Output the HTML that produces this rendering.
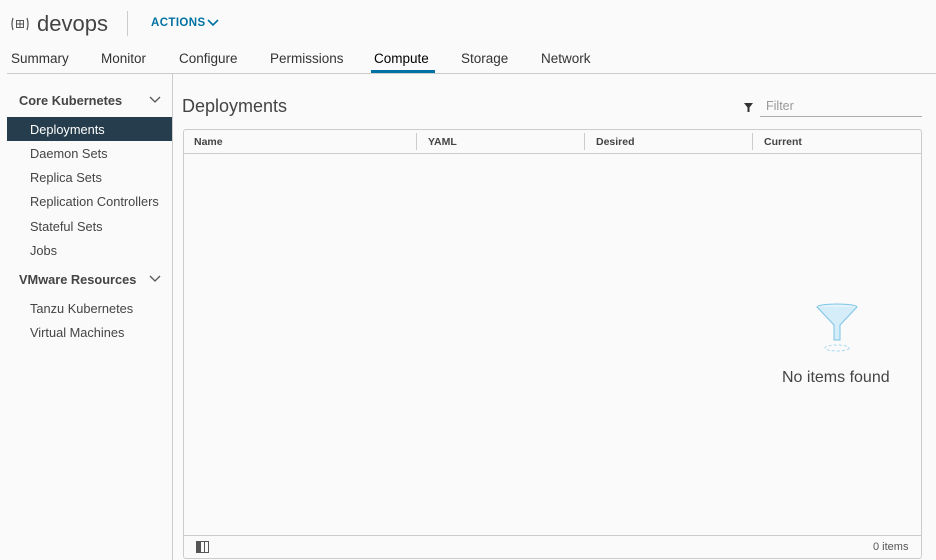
<!DOCTYPE html>
<html><head><style>
*{margin:0;padding:0;box-sizing:border-box}
body{width:936px;height:560px;background:#fafafa;font-family:"Liberation Sans",sans-serif;color:#333;position:relative;overflow:hidden}
.a{position:absolute;white-space:nowrap}
.tab{font-size:13.5px;top:51px;color:#333}
.side{font-size:12.8px;left:30px;color:#444}
.hd{font-size:10.5px;font-weight:bold;top:136px;color:#444}
.sep{position:absolute;top:133px;width:1px;height:17px;background:#ccc}
</style></head><body>
<svg class="a" style="left:10px;top:16px" width="20" height="16" viewBox="0 0 20 16"><path d="M3 2 Q1 8 3 14 M17 2 Q19 8 17 14" stroke="#555" fill="none" stroke-width="1.2"/><rect x="6.5" y="4.5" width="7" height="7" stroke="#555" fill="none"/><path d="M10 4.5v7M6.5 8h7" stroke="#555"/></svg>
<div class="a" style="left:37px;top:11px;font-size:22px;color:#444">devops</div>
<div class="a" style="left:127px;top:11px;width:1px;height:25px;background:#ccc"></div>
<div class="a" style="left:151px;top:17px;font-size:11.5px;color:#0072a3;letter-spacing:0.4px;font-weight:bold">ACTIONS</div>
<svg class="a" style="left:207px;top:18px" width="12" height="9"><path d="M1 2l5 5 5-5" stroke="#0072a3" stroke-width="1.6" fill="none"/></svg>
<div class="a tab" style="left:11px">Summary</div>
<div class="a tab" style="left:101px">Monitor</div>
<div class="a tab" style="left:179px">Configure</div>
<div class="a tab" style="left:270px">Permissions</div>
<div class="a tab" style="left:374px;color:#000">Compute</div>
<div class="a" style="left:371px;top:70px;width:64px;height:3px;background:#0072a3"></div>
<div class="a tab" style="left:461px">Storage</div>
<div class="a tab" style="left:541px">Network</div>
<div class="a" style="left:7px;top:73px;width:929px;height:1px;background:#ccc"></div>
<div class="a" style="left:172px;top:74px;width:1px;height:486px;background:#ccc"></div>
<div class="a" style="left:19px;top:93px;font-size:12.8px;font-weight:bold;color:#444">Core Kubernetes</div>
<svg class="a" style="left:149px;top:96px" width="12" height="8"><path d="M1 1l5 5 5-5" stroke="#555" stroke-width="1.3" fill="none"/></svg>
<div class="a" style="left:7px;top:117px;width:165px;height:24px;background:#253d4c"></div>
<div class="a side" style="top:122px;color:#fff">Deployments</div>
<div class="a side" style="top:146px">Daemon Sets</div>
<div class="a side" style="top:170px">Replica Sets</div>
<div class="a side" style="top:194px">Replication Controllers</div>
<div class="a side" style="top:219px">Stateful Sets</div>
<div class="a side" style="top:243px">Jobs</div>
<div class="a" style="left:19px;top:272px;font-size:12.8px;font-weight:bold;color:#444">VMware Resources</div>
<svg class="a" style="left:149px;top:275px" width="12" height="8"><path d="M1 1l5 5 5-5" stroke="#555" stroke-width="1.3" fill="none"/></svg>
<div class="a side" style="top:301px">Tanzu Kubernetes</div>
<div class="a side" style="top:325px">Virtual Machines</div>
<div class="a" style="left:182px;top:96px;font-size:18px;color:#444">Deployments</div>
<svg class="a" style="left:744px;top:103px" width="9" height="9"><path d="M0 0h9L5.5 4.5V9H3.5V4.5z" fill="#333"/></svg>
<div class="a" style="left:766px;top:99px;font-size:12.5px;color:#999">Filter</div>
<div class="a" style="left:760px;top:116px;width:162px;height:1px;background:#aaa"></div>
<div class="a" style="left:183px;top:129px;width:739px;height:430px;border:1px solid #ccc;border-radius:3px;background:#fafafa"></div>
<div class="a" style="left:184px;top:153px;width:737px;height:1px;background:#ccc"></div>
<div class="a hd" style="left:194px">Name</div>
<div class="sep" style="left:416px"></div>
<div class="a hd" style="left:428px">YAML</div>
<div class="sep" style="left:584px"></div>
<div class="a hd" style="left:596px">Desired</div>
<div class="sep" style="left:752px"></div>
<div class="a hd" style="left:764px">Current</div>
<svg class="a" style="left:815px;top:303px" width="44" height="50" viewBox="0 0 44 50"><ellipse cx="22" cy="4" rx="20" ry="3" fill="#e3f3fb" stroke="#7cc4e6"/><path d="M2 4 L19 22 V37 H25 V22 L42 4" fill="#d4edf9" stroke="#7cc4e6"/><ellipse cx="22" cy="45" rx="12" ry="3" fill="none" stroke="#a8d8ef" stroke-dasharray="3 2"/></svg>
<div class="a" style="left:782px;top:369px;font-size:16px;color:#444">No items found</div>
<div class="a" style="left:184px;top:535px;width:737px;height:1px;background:#ccc"></div>
<svg class="a" style="left:196px;top:541px" width="13" height="12"><rect x="0.5" y="0.5" width="12" height="11" fill="none" stroke="#555"/><rect x="1" y="1" width="4" height="10" fill="#555"/><path d="M8.5 1v10" stroke="#555"/></svg>
<div class="a" style="left:873px;top:541px;font-size:11px;color:#555">0 items</div>
</body></html>
